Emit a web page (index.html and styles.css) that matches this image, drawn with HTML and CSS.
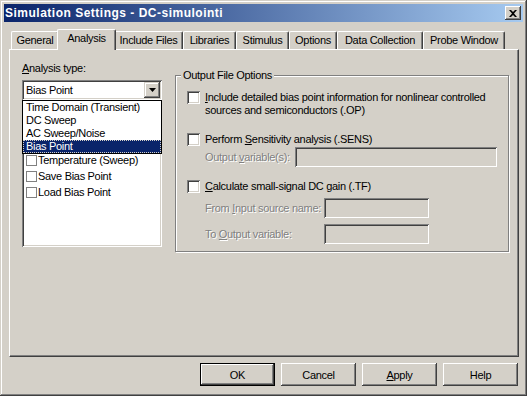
FILE: index.html
```html
<!DOCTYPE html>
<html lang="en">
<head>
<meta charset="UTF-8" />
<title>Simulation Settings - DC-simulointi</title>
<link rel="stylesheet" href="styles.css">
</head>
<body>

<div class="window">
  <div class="titlebar">
    <span class="title">Simulation Settings - DC-simulointi</span>
    <button class="close" title="Close">
      <svg width="8" height="7" viewBox="0 0 8 7"><path d="M0 0h2l2 2 2-2h2L5 3.5 8 7H6L4 5 2 7H0l3-3.5z" fill="#000"/></svg>
    </button>
  </div>

  <div class="tabs">
    <div class="tab w48">General</div>
    <div class="tab w55 active">Analysis</div>
    <div class="tab w69">Include Files</div>
    <div class="tab w53">Libraries</div>
    <div class="tab w53">Stimulus</div>
    <div class="tab w48">Options</div>
    <div class="tab w86">Data Collection</div>
    <div class="tab w82">Probe Window</div>
  </div>

  <div class="sheet">
    <div class="analysis-col">
      <div class="label"><u>A</u>nalysis type:</div>
      <div class="combo-wrap">
        <div class="combo">
          <span class="combo-text">Bias Point</span>
          <span class="combo-btn">
            <svg width="7" height="4" viewBox="0 0 7 4"><path d="M0 0h7L3.5 4z" fill="#000"/></svg>
          </span>
        </div>
        <ul class="dropdown">
          <li>Time Domain (Transient)</li>
          <li>DC Sweep</li>
          <li>AC Sweep/Noise</li>
          <li class="selected">Bias Point</li>
        </ul>
      </div>
      <!-- options list, partly covered by the open dropdown -->
      <div class="listbox">
        <div class="list-item"><span class="lchk"></span>Temperature (Sweep)</div>
        <div class="list-item"><span class="lchk"></span>Save Bias Point</div>
        <div class="list-item"><span class="lchk"></span>Load Bias Point</div>
      </div>
    </div>

    <fieldset class="group">
      <legend>Output File Options</legend>

      <div class="opt first">
        <span class="chk"></span>
        <span class="opt-text"><u>I</u>nclude detailed bias point information for nonlinear controlled<br>sources and semiconductors (.OP)</span>
      </div>

      <div class="opt second">
        <span class="chk"></span>
        <span class="opt-text">Perform <u>S</u>ensitivity analysis (.SENS)</span>
      </div>
      <div class="field-row">
        <span class="disabled short">Output <u>v</u>ariable(s):</span>
        <span class="field wide"></span>
      </div>

      <div class="opt third">
        <span class="chk"></span>
        <span class="opt-text"><u>C</u>alculate small-signal DC gain (.TF)</span>
      </div>
      <div class="field-row gap5">
        <span class="disabled long">From <u>I</u>nput source name:</span>
        <span class="field narrow"></span>
      </div>
      <div class="field-row gap6">
        <span class="disabled long">To <u>O</u>utput variable:</span>
        <span class="field narrow"></span>
      </div>
    </fieldset>
  </div>

  <div class="buttons">
    <button class="btn default">OK</button>
    <button class="btn">Cancel</button>
    <button class="btn"><u>A</u>pply</button>
    <button class="btn">Help</button>
  </div>
</div>

</body>
</html>
```

FILE: styles.css
```css
body {
  margin: 0;
  background: #d4d0c8;
  font-family: "Liberation Sans", Arial, sans-serif;
  font-size: 11px;
  letter-spacing: -0.3px;
  color: #000;
}

.window {
  width: 527px;
  height: 396px;
  box-sizing: border-box;
  padding: 4px;
  background: #d4d0c8;
  box-shadow: inset -1px -1px 0 #404040, inset 1px 1px 0 #d4d0c8,
              inset -2px -2px 0 #808080, inset 2px 2px 0 #fff;
}

.titlebar {
  height: 18px;
  display: flex;
  align-items: center;
  justify-content: space-between;
  padding: 0 2px 0 1px;
  background: linear-gradient(to right, #0a246a, #a6caf0);
}

.title {
  color: #fff;
  font-weight: bold;
  font-size: 12px;
  letter-spacing: 0.5px;
}

.close {
  width: 16px;
  height: 14px;
  padding: 0;
  border: none;
  background: #d4d0c8;
  display: flex;
  align-items: center;
  justify-content: center;
  box-shadow: inset -1px -1px 0 #404040, inset 1px 1px 0 #fff,
              inset -2px -2px 0 #808080;
}

/* tab strip */
.tabs {
  display: flex;
  align-items: flex-end;
  height: 20px;
  margin: 7px 4px 0 5px;
  padding-left: 2px;
}

.tab {
  flex: none;
  height: 18px;
  box-sizing: border-box;
  padding: 0;
  text-align: center;
  line-height: 16px;
  border: 1px solid;
  border-color: #fff #404040 transparent #fff;
  border-bottom: none;
  border-radius: 2px 2px 0 0;
  box-shadow: inset -1px 0 0 #808080;
  white-space: nowrap;
}

.w48 { width: 48px; }
.w53 { width: 53px; }
.w55 { width: 55px; }
.w69 { width: 69px; }
.w82 { width: 82px; }
.w86 { width: 86px; }

.tab.active {
  position: relative;
  z-index: 1;
  width: 59px;
  height: 21px;
  margin: 0 -2px -1px -2px;
  line-height: 16px;
  background: #d4d0c8;
}

/* property page */
.sheet {
  height: 308px;
  box-sizing: border-box;
  margin: 0 4px 0 5px;
  padding: 12px 0 0 12px;
  display: flex;
  align-items: flex-start;
  gap: 13px;
  border: 1px solid;
  border-color: #fff #404040 #404040 #fff;
  box-shadow: inset -1px -1px 0 #808080;
}

.analysis-col {
  width: 140px;
}

.label {
  line-height: 13px;
}

.combo-wrap {
  position: relative;
  margin-top: 5px;
}

.combo {
  height: 20px;
  box-sizing: border-box;
  display: flex;
  align-items: center;
  justify-content: space-between;
  padding: 2px;
  background: #fff;
  box-shadow: inset 1px 1px 0 #808080, inset -1px -1px 0 #fff,
              inset 2px 2px 0 #404040, inset -2px -2px 0 #d4d0c8;
}

.combo-text {
  padding-left: 2px;
}

.combo-btn {
  width: 16px;
  height: 16px;
  display: flex;
  align-items: center;
  justify-content: center;
  background: #d4d0c8;
  box-shadow: inset -1px -1px 0 #404040, inset 1px 1px 0 #d4d0c8,
              inset -2px -2px 0 #808080, inset 2px 2px 0 #fff;
}

.dropdown {
  position: absolute;
  top: 100%;
  left: 0;
  z-index: 2;
  width: 140px;
  box-sizing: border-box;
  margin: 0;
  padding: 0;
  list-style: none;
  background: #fff;
  border: 1px solid #000;
}

.dropdown li {
  height: 13px;
  line-height: 13px;
  padding-left: 3px;
  white-space: nowrap;
}

.dropdown li.selected {
  background: #0a246a;
  color: #fff;
  outline: 1px dotted #d4d0c8;
  outline-offset: -1px;
}

.listbox {
  height: 113px;
  box-sizing: border-box;
  margin-top: 34px;
  padding: 18px 2px 2px;
  background: #fff;
  box-shadow: inset 1px 1px 0 #808080, inset -1px -1px 0 #fff,
              inset 2px 2px 0 #404040, inset -2px -2px 0 #d4d0c8;
}

.list-item {
  height: 16px;
  display: flex;
  align-items: center;
  padding-left: 2px;
  white-space: nowrap;
}

.lchk {
  width: 11px;
  height: 11px;
  box-sizing: border-box;
  border: 1px solid #808080;
  margin-right: 1px;
}

/* group box */
.group {
  width: 334px;
  box-sizing: border-box;
  margin: 7px 0 0 0;
  padding: 0 11px 7px 11px;
  min-width: 0;
  border: 1px solid #808080;
  box-shadow: 1px 1px 0 #fff, inset 1px 1px 0 #fff;
}

.group legend {
  margin-left: -6px;
  padding: 0 2px;
  line-height: 13px;
  background: #d4d0c8;
}

.opt {
  display: flex;
  align-items: flex-start;
}

.opt.first { margin-top: 9px; }
.opt.second { margin-top: 16px; }
.opt.third { margin-top: 13px; }

.chk {
  width: 13px;
  height: 13px;
  flex: none;
  box-sizing: border-box;
  background: #fff;
  box-shadow: inset 1px 1px 0 #808080, inset -1px -1px 0 #fff,
              inset 2px 2px 0 #404040, inset -2px -2px 0 #d4d0c8;
}

.opt-text {
  margin-left: 5px;
  line-height: 13px;
  white-space: nowrap;
}

.field-row {
  display: flex;
  align-items: center;
  margin: 1px 0 0 18px;
}

.field-row.gap5 { margin-top: 5px; }
.field-row.gap6 { margin-top: 6px; }

.disabled {
  flex: none;
  color: #808080;
  text-shadow: 1px 1px 0 #fff;
  white-space: nowrap;
}

.disabled.short { width: 90px; }
.disabled.long { width: 119px; }

.field {
  height: 20px;
  box-sizing: border-box;
  background: #d4d0c8;
  box-shadow: inset 1px 1px 0 #808080, inset -1px -1px 0 #fff,
              inset 2px 2px 0 #404040, inset -2px -2px 0 #d4d0c8;
}

.field.wide { width: 202px; }
.field.narrow { width: 105px; }

/* dialog buttons */
.buttons {
  display: flex;
  justify-content: flex-end;
  gap: 6px;
  margin: 6px 5px 0 0;
}

.btn {
  width: 75px;
  height: 23px;
  padding: 0;
  border: none;
  background: #d4d0c8;
  font-family: inherit;
  font-size: 11px;
  letter-spacing: -0.3px;
  color: #000;
  box-shadow: inset -1px -1px 0 #404040, inset 1px 1px 0 #fff,
              inset -2px -2px 0 #808080;
}

.btn.default {
  border: 1px solid #000;
}
```
